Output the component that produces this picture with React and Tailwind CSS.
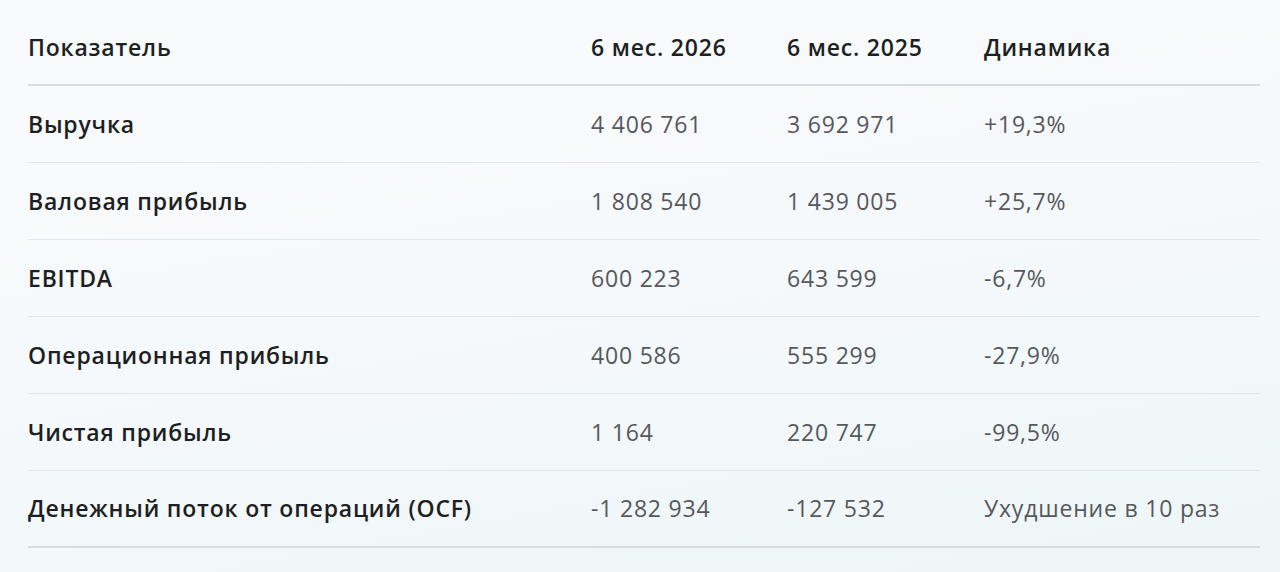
import React from "react";

const rows = [
  ["Выручка", "4 406 761", "3 692 971", "+19,3%"],
  ["Валовая прибыль", "1 808 540", "1 439 005", "+25,7%"],
  ["EBITDA", "600 223", "643 599", "-6,7%"],
  ["Операционная прибыль", "400 586", "555 299", "-27,9%"],
  ["Чистая прибыль", "1 164", "220 747", "-99,5%"],
  ["Денежный поток от операций (OCF)", "-1 282 934", "-127 532", "Ухудшение в 10 раз"],
];

export default function App() {
  return (
    <div
      className="w-[1280px] h-[572px] overflow-hidden bg-[linear-gradient(170deg,#f9fafc_0%,#f6f9fb_45%,#eef6f8_100%)] pl-[28px] pr-[20px] tracking-[0.8px]"
      style={{ fontFamily: '"Open Sans", "Noto Sans", sans-serif' }}
    >
      <div className="grid grid-cols-[563px_196px_197px_1fr] h-[86px] pt-[10px] items-center border-b-2 border-[#d9dcdf] text-[23px] font-semibold text-[#1e1f22]">
        <div>Показатель</div>
        <div>6 мес. 2026</div>
        <div>6 мес. 2025</div>
        <div>Динамика</div>
      </div>
      {rows.map((r, i) => (
        <div
          key={i}
          className={`grid grid-cols-[563px_196px_197px_1fr] items-center text-[23px] h-[77px] ${
            i === rows.length - 1 ? "border-b-2 border-[#d9dcdf]" : "border-b border-[#e3e7ea]"
          }`}
        >
          <div className="font-semibold text-[#1e1f22]">{r[0]}</div>
          <div className="text-[#56585c]">{r[1]}</div>
          <div className="text-[#56585c]">{r[2]}</div>
          <div className="text-[#56585c]">{r[3]}</div>
        </div>
      ))}
    </div>
  );
}
